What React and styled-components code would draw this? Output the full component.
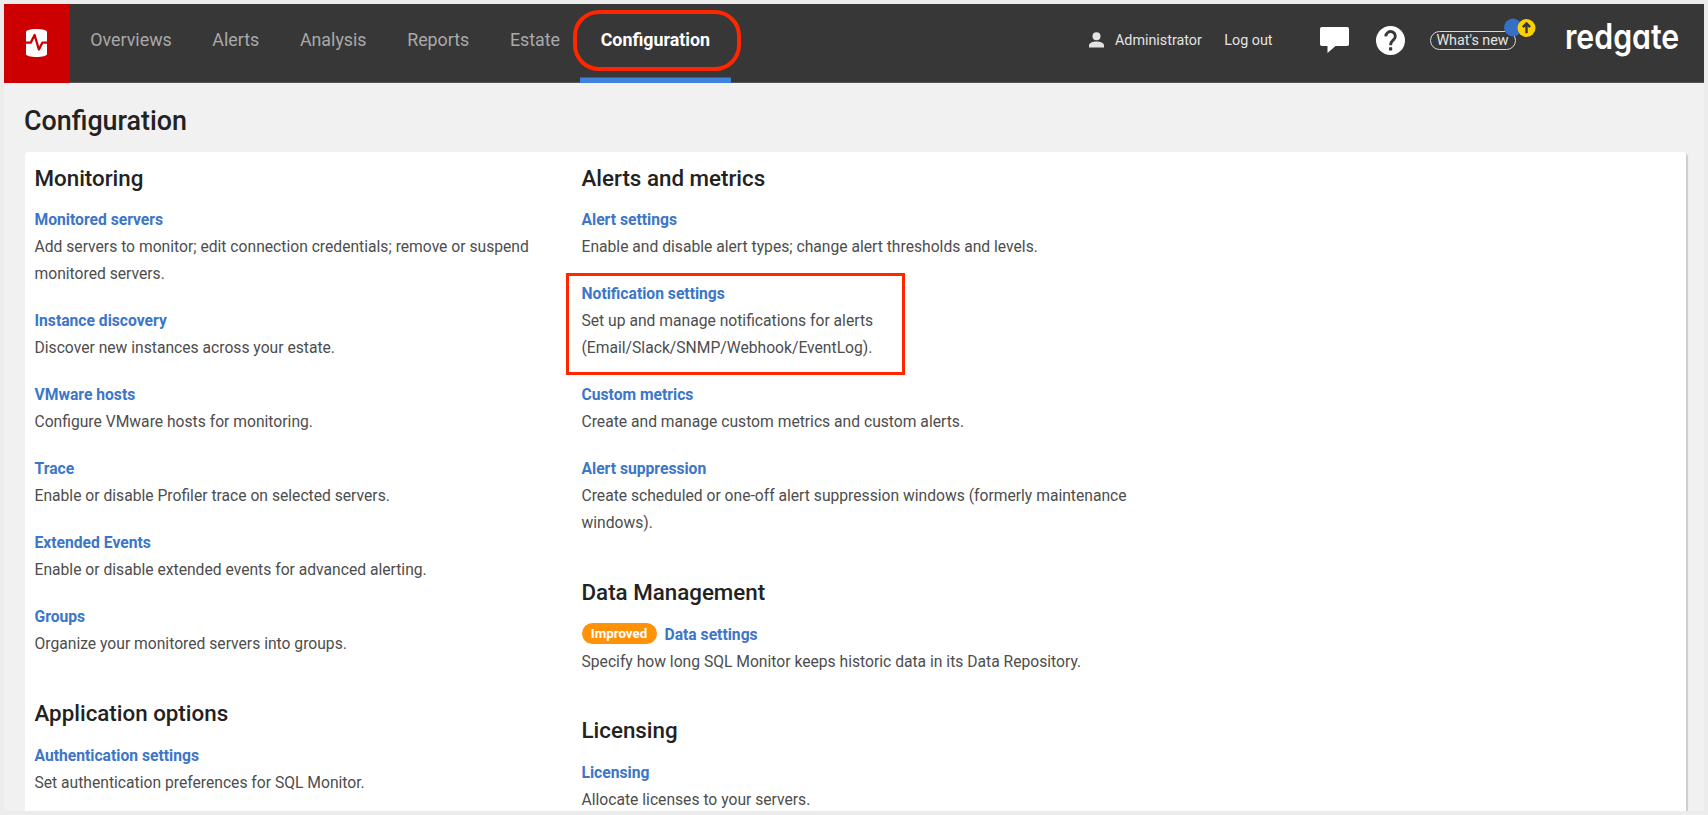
import React from "react";
import styled, { createGlobalStyle, css } from "styled-components";

const GlobalStyle = createGlobalStyle`
  * { box-sizing: border-box; }
  body {
    margin: 0;
    background: #ececec;
    font-family: Roboto, "Liberation Sans", sans-serif;
    overflow: hidden;
  }
  h1, h2, p { margin: 0; }
  a { text-decoration: none; }
`;

const Page = styled.div`
  height: 100vh;
  padding: 4px;
`;

const Shell = styled.div`
  display: flex;
  flex-direction: column;
  height: 100%;
  background: #f1f1f1;
  overflow: hidden;
`;

const Header = styled.header`
  display: flex;
  flex: none;
  height: 79px;
  background: #373737;
  box-shadow: inset 0 -1px 0 #555;
`;

const Brand = styled.a`
  display: flex;
  width: 66px;
  padding: 25px 0 0 22px;
  background: #cc0000;
`;

const Nav = styled.nav`
  display: flex;
`;

const NavItem = styled.a`
  position: relative;
  padding: 0 20.3px;
  font-size: 17.83px;
  line-height: 72px;
  color: #a9a9a9;
  ${(p) =>
    p.$active &&
    css`
      padding-right: 21px;
      color: #fff;
      font-weight: 700;
      box-shadow: inset 0 -5.5px 0 #3f83de;
    `}
`;

const NavHighlight = styled.span`
  position: absolute;
  top: 6px;
  left: -7px;
  width: 168px;
  height: 61px;
  border: 4px solid #ff2600;
  border-radius: 26px;
`;

const Tools = styled.div`
  display: flex;
  align-items: center;
  height: 72px;
  margin-left: auto;
  padding-right: 26px;
  font-size: 14.32px;
  color: #e3e3e3;
`;

const UserLink = styled.a`
  display: flex;
  align-items: center;
  gap: 11px;
  margin-right: 22.5px;
`;

const LogOut = styled.a`
  margin-right: 47px;
`;

const IconButton = styled.a`
  display: flex;
  margin-right: ${(p) => p.$gap}px;
`;

const WhatsNew = styled.a`
  position: relative;
  width: 86px;
  height: 19px;
  margin-right: 49.5px;
  border: 1px solid #d8d8d8;
  border-radius: 10px;
  line-height: 17px;
  text-align: center;
  white-space: nowrap;
`;

const Dots = styled.span`
  position: absolute;
  top: -14px;
  left: 73px;
  display: flex;
`;

const Wordmark = styled.span`
  width: 113px;
  margin-bottom: 8px;
  font-family: Inter, sans-serif;
  font-size: 35px;
  font-weight: 600;
  font-feature-settings: "cv11";
  line-height: 40px;
  color: #fff;
  transform: scaleX(0.865);
  transform-origin: 0 50%;
  white-space: nowrap;
`;

const PageTitle = styled.h1`
  flex: none;
  padding: 20px 20px 0;
  height: 69px;
  font-size: 26.85px;
  font-weight: 500;
  line-height: 36px;
  color: #222;
`;

const Panel = styled.main`
  display: grid;
  flex: 1;
  grid-template-columns: 520px 565px;
  column-gap: 27px;
  margin: 0 18px 0 21px;
  padding: 11.05px 9.5px 0;
  min-height: 0;
  background: #fff;
  border-radius: 3px 3px 0 0;
  box-shadow: 2px 2px 1px #cdcdcd;
  overflow: hidden;
`;

const Column = styled.div`
  display: flex;
  flex-direction: column;
  gap: 40.8px;
`;

const Section = styled.section`
  display: flex;
  flex-direction: column;
`;

const SectionTitle = styled.h2`
  margin-bottom: 13.35px;
  font-size: 22.35px;
  font-weight: 500;
  line-height: 30px;
  color: #222;
`;

const Entries = styled.div`
  display: flex;
  flex-direction: column;
  gap: 20px;
`;

const Entry = styled.div`
  position: relative;
  max-width: ${(p) => (p.$marked ? "300px" : "none")};
  font-size: 15.66px;
  line-height: 27px;
`;

const EntryHead = styled.div`
  display: flex;
  height: 27px;
`;

const EntryLink = styled.a`
  font-weight: 700;
  color: #3b76c9;
`;

const EntryText = styled.p`
  color: #4d4d4d;
`;

const EntryHighlight = styled.span`
  position: absolute;
  top: -7.5px;
  left: -15.5px;
  width: 339px;
  height: 102px;
  border: 3px solid #ff2600;
`;

const Tag = styled.span`
  align-self: flex-start;
  width: 75px;
  height: 21px;
  margin: 2px 8px 0 0;
  border-radius: 11px;
  background: #ff9207;
  font-size: 13.35px;
  font-weight: 700;
  line-height: 21px;
  text-align: center;
  color: #fff;
`;

const LEFT = [
  {
    title: "Monitoring",
    entries: [
      { name: "Monitored servers", text: "Add servers to monitor; edit connection credentials; remove or suspend monitored servers." },
      { name: "Instance discovery", text: "Discover new instances across your estate." },
      { name: "VMware hosts", text: "Configure VMware hosts for monitoring." },
      { name: "Trace", text: "Enable or disable Profiler trace on selected servers." },
      { name: "Extended Events", text: "Enable or disable extended events for advanced alerting." },
      { name: "Groups", text: "Organize your monitored servers into groups." },
    ],
  },
  {
    title: "Application options",
    entries: [{ name: "Authentication settings", text: "Set authentication preferences for SQL Monitor." }],
  },
];

const RIGHT = [
  {
    title: "Alerts and metrics",
    entries: [
      { name: "Alert settings", text: "Enable and disable alert types; change alert thresholds and levels." },
      { name: "Notification settings", text: "Set up and manage notifications for alerts (Email/Slack/SNMP/Webhook/EventLog).", marked: true },
      { name: "Custom metrics", text: "Create and manage custom metrics and custom alerts." },
      { name: "Alert suppression", text: "Create scheduled or one-off alert suppression windows (formerly maintenance windows)." },
    ],
  },
  {
    title: "Data Management",
    entries: [{ name: "Data settings", tag: "Improved", text: "Specify how long SQL Monitor keeps historic data in its Data Repository." }],
  },
  {
    title: "Licensing",
    entries: [{ name: "Licensing", text: "Allocate licenses to your servers." }],
  },
];

const MonitorLogo = () => (
  <svg width="21" height="28" viewBox="0 0 21 28">
    <path d="M0 3C0 1 5 0 10.500 0S21 1 21 3V25c0 2-5 3-10.500 3S0 27 0 25Z" fill="#fff" />
    <path d="M-1 13.700H4.700L8.600 6l4.300 14.500 3.400-6.800H22" fill="none" stroke="#cc0000" strokeWidth="2.300" strokeLinejoin="round" />
  </svg>
);

const PersonIcon = () => (
  <svg width="15" height="16" viewBox="0 0 15 16">
    <circle cx="7.500" cy="4.200" r="4" fill="#e3e3e3" />
    <path d="M0 15.500V13.500C0 10.800 4 9.500 7.500 9.500S15 10.800 15 13.500v2Z" fill="#e3e3e3" />
  </svg>
);

const ChatIcon = () => (
  <svg width="29" height="26" viewBox="0 0 29 26">
    <path d="M1.800 0H27.200A1.800 1.800 0 0 1 29 1.800V17.200A1.800 1.800 0 0 1 27.200 19H15.500L7.500 26V19H1.800A1.800 1.800 0 0 1 0 17.200V1.800A1.800 1.800 0 0 1 1.800 0Z" fill="#fff" />
  </svg>
);

const HelpIcon = () => (
  <svg width="29" height="29" viewBox="0 0 29 29">
    <circle cx="14.500" cy="14.500" r="14.500" fill="#fff" />
    <path d="M9.900 10.400A4.700 4.700 0 1 1 17.700 13.700C15.900 15.300 14.600 16 14.600 19.200" fill="none" stroke="#373737" strokeWidth="2.900" />
    <rect x="13" y="21.300" width="3.200" height="3.200" rx="0.600" fill="#373737" />
  </svg>
);

const UpdateDots = () => (
  <svg width="32" height="19" viewBox="0 0 32 19">
    <circle cx="9" cy="9.500" r="9" fill="#356fc6" />
    <circle cx="22.500" cy="10" r="9" fill="#fdd006" />
    <path d="M22.500 15.300V6M18.900 9.200l3.600-3.800 3.600 3.800" fill="none" stroke="#373737" strokeWidth="2.400" />
  </svg>
);

const renderSection = (section) => (
  <Section key={section.title}>
    <SectionTitle>{section.title}</SectionTitle>
    <Entries>
      {section.entries.map((e) => (
        <Entry key={e.name} $marked={e.marked}>
          <EntryHead>
            {e.tag && <Tag>{e.tag}</Tag>}
            <EntryLink>{e.name}</EntryLink>
          </EntryHead>
          <EntryText>{e.text}</EntryText>
          {e.marked && <EntryHighlight />}
        </Entry>
      ))}
    </Entries>
  </Section>
);

export default function App() {
  return (
    <Page>
      <GlobalStyle />
      <Shell>
        <Header>
          <Brand><MonitorLogo /></Brand>
          <Nav>
            {["Overviews", "Alerts", "Analysis", "Reports", "Estate"].map((n) => (
              <NavItem key={n}>{n}</NavItem>
            ))}
            <NavItem $active>
              Configuration
              <NavHighlight />
            </NavItem>
          </Nav>
          <Tools>
            <UserLink><PersonIcon />Administrator</UserLink>
            <LogOut>Log out</LogOut>
            <IconButton $gap={27}><ChatIcon /></IconButton>
            <IconButton $gap={25}><HelpIcon /></IconButton>
            <WhatsNew>
              What's new
              <Dots><UpdateDots /></Dots>
            </WhatsNew>
            <Wordmark>redgate</Wordmark>
          </Tools>
        </Header>
        <PageTitle>Configuration</PageTitle>
        <Panel>
          <Column>{LEFT.map(renderSection)}</Column>
          <Column>{RIGHT.map(renderSection)}</Column>
        </Panel>
      </Shell>
    </Page>
  );
}
